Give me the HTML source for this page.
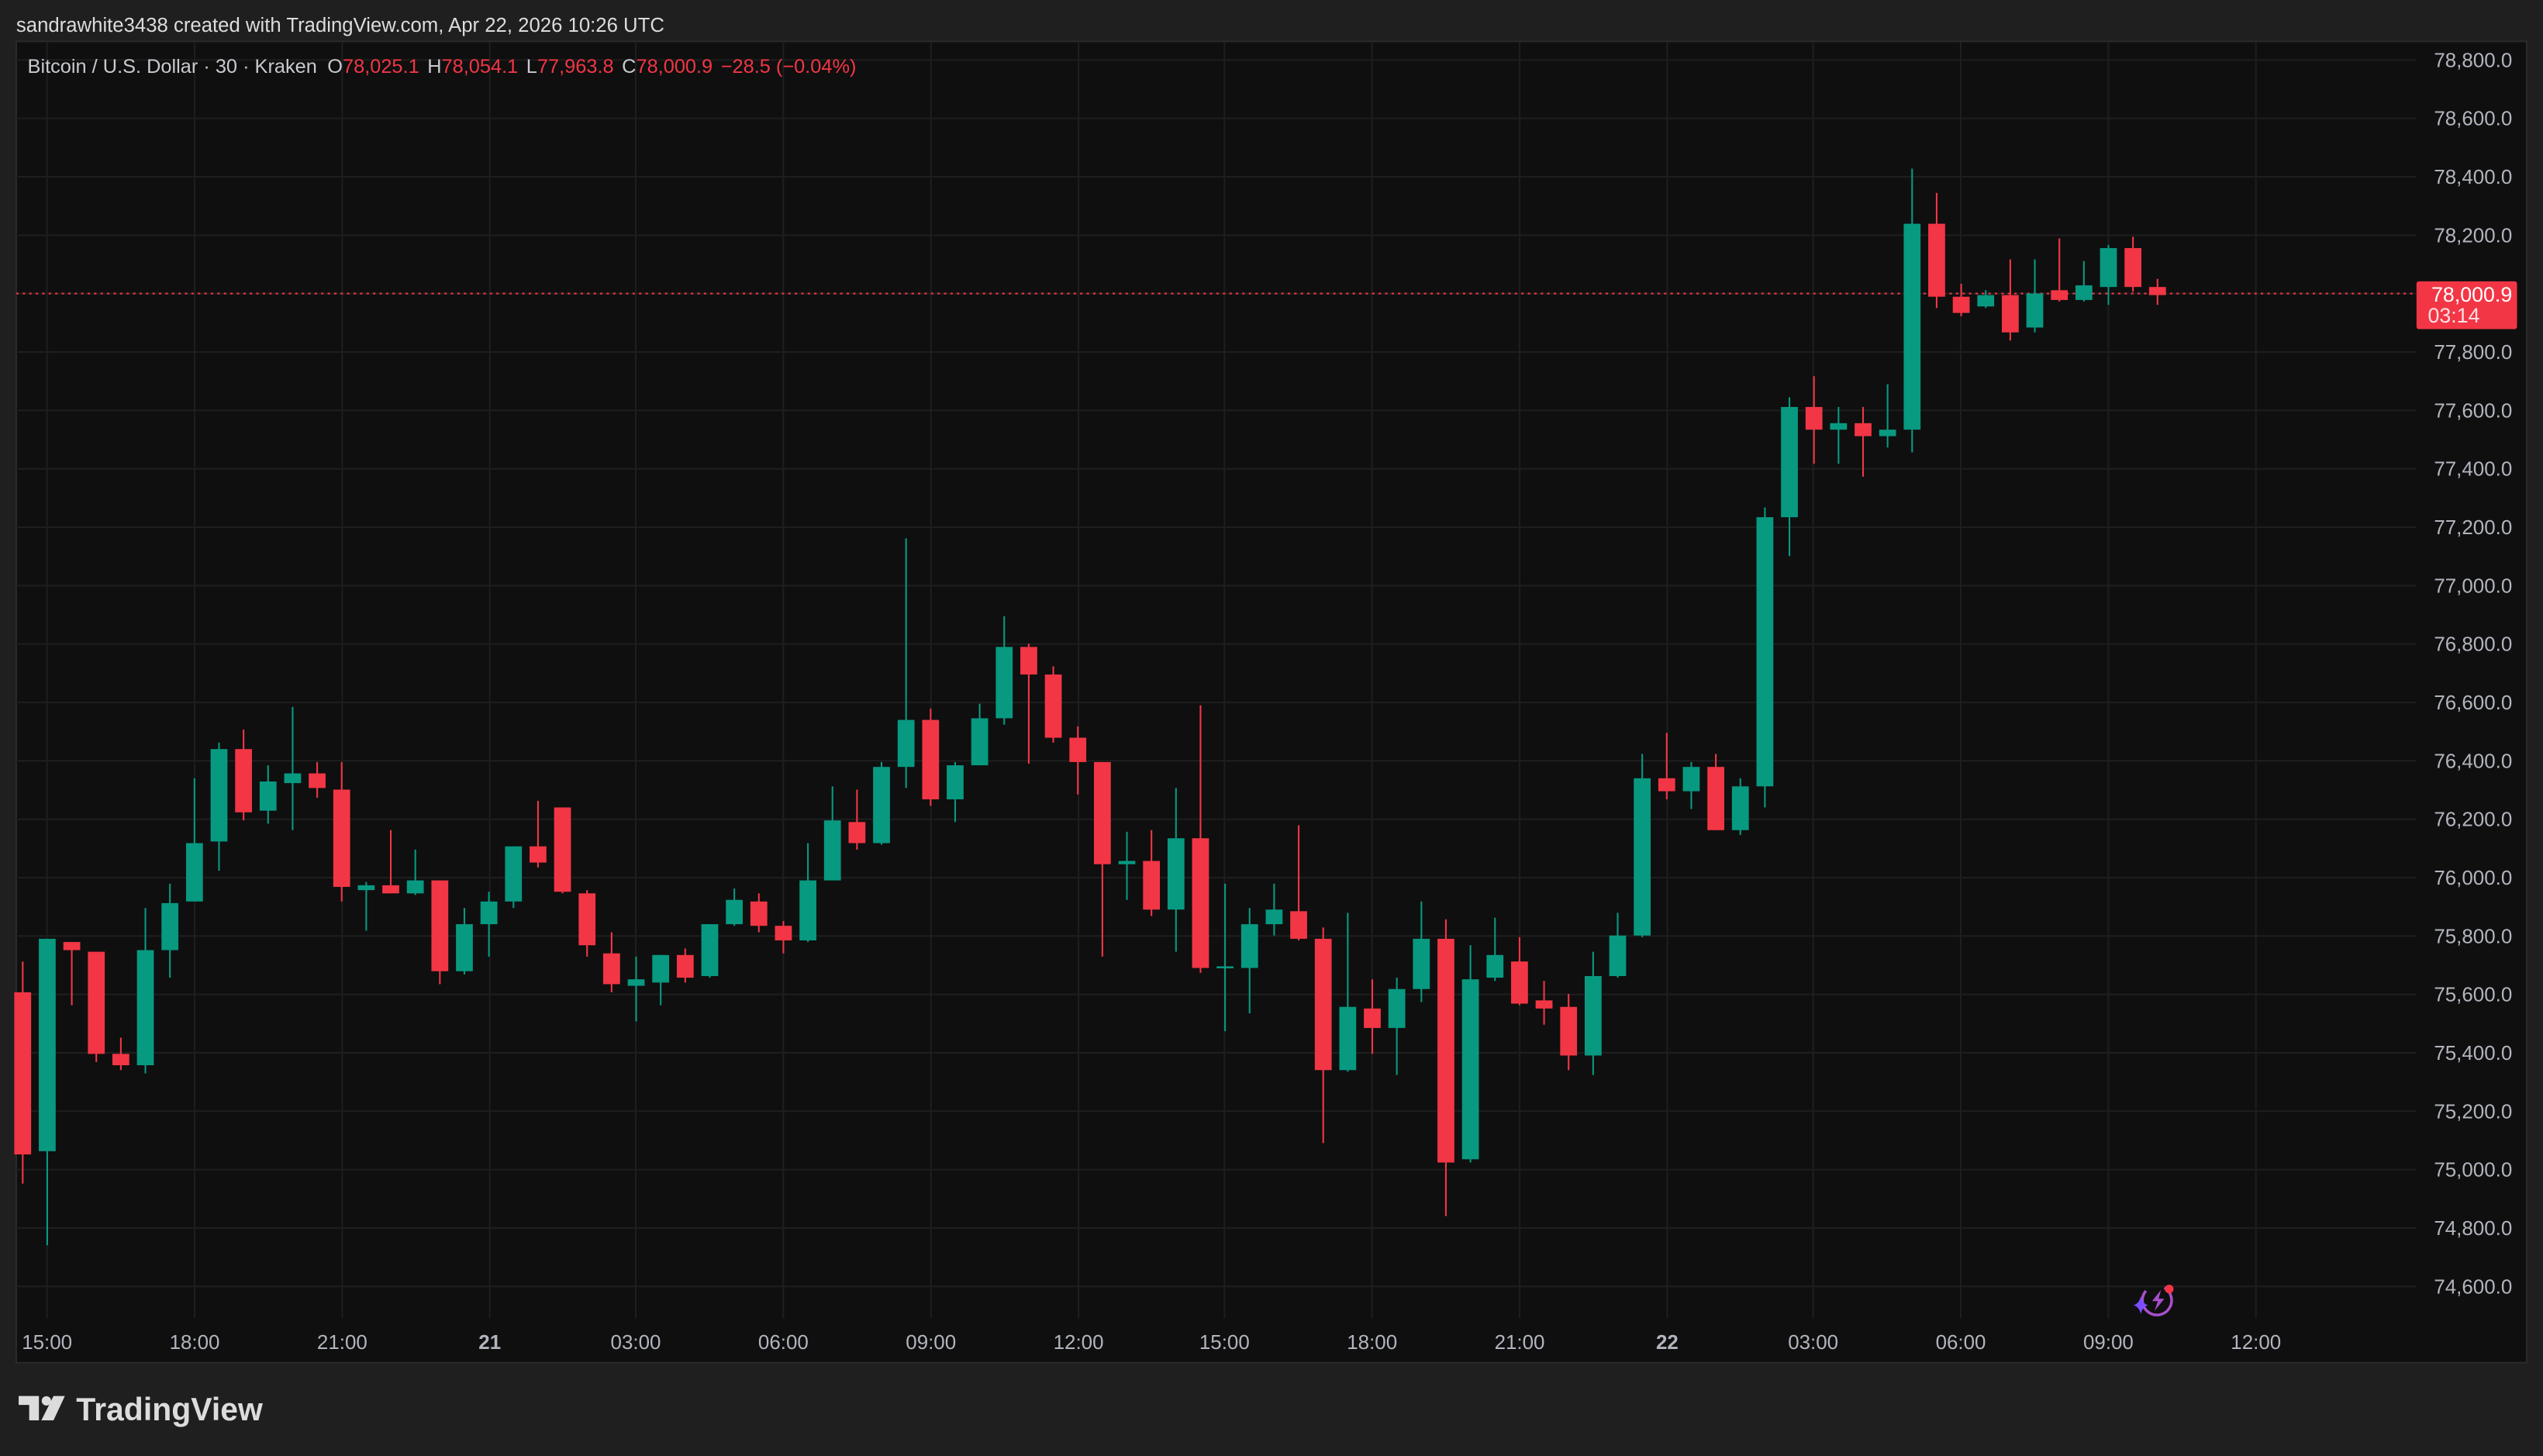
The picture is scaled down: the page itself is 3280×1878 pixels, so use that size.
<!DOCTYPE html>
<html><head><meta charset="utf-8"><style>
html,body{margin:0;padding:0;background:#1f1f1f;}
svg{display:block}
text{font-family:"Liberation Sans",sans-serif}
</style></head><body>
<svg id="s" width="3280" height="1878" viewBox="0 0 1568 898" preserveAspectRatio="none" xmlns="http://www.w3.org/2000/svg">
<rect width="1568" height="898" fill="#1f1f1f"/>
<text x="10" y="19.5" font-size="12.3" fill="#dcdcdc">sandrawhite3438 created with TradingView.com, Apr 22, 2026 10:26 UTC</text>
<rect x="10" y="25.5" width="1548" height="815" fill="#0f0f0f" stroke="#2a2a2a" stroke-width="1"/>
<g id="grid" stroke="#1e1e1e" stroke-width="1"></g>
<g id="plabels" font-size="12.4" fill="#b2b5be" text-anchor="end"></g>
<g id="tlabels" font-size="12.4" fill="#b2b5be" text-anchor="middle"></g>
<line x1="10" y1="181" x2="1490" y2="181" stroke="#f23645" stroke-width="1" stroke-dasharray="1.5,2.5"/>
<g id="candles"></g>
<text x="17" y="45" font-size="12" fill="#c8cad0" textLength="511" lengthAdjust="spacingAndGlyphs">Bitcoin / U.S. Dollar · 30 · Kraken <tspan dx="3">O</tspan><tspan fill="#f23645">78,025.1</tspan><tspan dx="5">H</tspan><tspan fill="#f23645">78,054.1</tspan><tspan dx="5">L</tspan><tspan fill="#f23645">77,963.8</tspan><tspan dx="5">C</tspan><tspan fill="#f23645">78,000.9</tspan><tspan dx="5" fill="#f23645">−28.5 (−0.04%)</tspan></text>
<rect x="1490" y="173.5" width="62" height="29.5" rx="1.5" fill="#f23645"/>
<text x="1549" y="186" font-size="12.8" fill="#ffffff" text-anchor="end">78,000.9</text>
<text x="1497" y="199" font-size="12.8" fill="#fde0e3">03:14</text>
<!-- icon -->
<circle cx="1330" cy="802" r="9" fill="none" stroke="#a94fc9" stroke-width="1.7" stroke-dasharray="44 13" transform="rotate(-60 1330 802)"/>
<path d="M1332.5 795.5 L1327 802.5 L1330.5 802.5 L1328.5 808.5 L1334.5 801 L1331 801 Z" fill="#a94fc9"/>
<circle cx="1337.5" cy="795" r="2.7" fill="#f23645"/>
<path d="M1320 799.5 Q1321 804 1324.5 805 Q1321 806 1320 810.5 Q1319 806 1315.5 805 Q1319 804 1320 799.5 Z" fill="#7a4dff"/>
<!-- logo -->
<path d="M11.5 861 H24 V876 H18 V866.5 H11.5 Z" fill="#dcdcdc"/>
<circle cx="28.6" cy="864" r="2.9" fill="#dcdcdc"/>
<path d="M33 861 H40 L33 876 H25.5 Z" fill="#dcdcdc"/>
<text x="47" y="876" font-size="20" font-weight="bold" fill="#dcdcdc" textLength="115" lengthAdjust="spacingAndGlyphs">TradingView</text>
</svg>
<script>
const NS="http://www.w3.org/2000/svg";
function el(t,a,p,txt){const e=document.createElementNS(NS,t);for(const k in a)e.setAttribute(k,a[k]);if(txt)e.textContent=txt;document.getElementById(p).appendChild(e);}
const ticks=[[29,"15:00"],[120,"18:00"],[211,"21:00"],[302,"21",1],[392,"03:00"],[483,"06:00"],[574,"09:00"],[665,"12:00"],[755,"15:00"],[846,"18:00"],[937,"21:00"],[1028,"22",1],[1118,"03:00"],[1209,"06:00"],[1300,"09:00"],[1391,"12:00"]];
ticks.forEach(t=>{el("line",{x1:t[0],y1:26,x2:t[0],y2:813},"grid");const a={x:t[0],y:832};if(t[2])a["font-weight"]="bold";el("text",a,"tlabels",t[1]);});
for(let i=0;i<=21;i++){const y=37+i*36.02;el("line",{x1:10,y1:y,x2:1490,y2:y},"grid");const p=78800-i*200;el("text",{x:1549,y:y+4.3},"plabels",p.toLocaleString("en-US")+".0");}
const C=[["r",612,712,593,730],["g",579,710,579,768],["r",581,586,581,620],["r",587,650,587,655],["r",650,657,640,660],["g",586,657,560,662],["g",557,586,545,603],["g",520,556,480,556],["g",462,519,458,537],["r",462,501,450,506],["g",482,500,472,508],["g",477,483,436,512],["r",477,486,470,492],["r",487,547,470,556],["g",546,549,544,574],["r",546,551,512,551],["g",543,551,524,552],["r",543,599,543,607],["g",570,599,560,601],["g",556,570,550,590],["g",522,556,522,560],["r",522,532,494,535],["r",498,550,498,551],["r",551,583,549,590],["r",588,607,575,612],["g",604,608,590,630],["g",589,606,589,620],["r",589,603,585,606],["g",570,602,570,603],["g",555,570,548,571],["r",556,571,551,575],["r",571,580,568,588],["g",543,580,520,581],["g",506,543,485,543],["r",507,520,487,524],["g",473,520,470,521],["g",444,473,332,486],["r",444,493,437,497],["g",472,493,470,507],["g",443,472,434,472],["g",399,443,380,447],["r",399,416,397,471],["r",416,455,411,458],["r",455,470,448,490],["r",470,533,470,590],["g",531,533,513,555],["r",531,561,512,565],["g",517,561,486,587],["r",517,597,435,600],["g",596,597,545,636],["g",570,597,560,625],["g",561,570,545,577],["r",562,579,509,580],["r",579,660,572,705],["g",621,660,563,661],["r",622,634,604,650],["g",610,634,603,663],["g",579,610,556,618],["r",579,717,567,750],["g",604,715,583,717],["g",589,603,566,605],["r",593,619,578,620],["r",617,622,605,632],["r",621,651,613,660],["g",602,651,587,663],["g",577,602,563,603],["g",480,577,465,578],["r",480,488,452,493],["g",473,488,470,499],["r",473,512,465,512],["g",485,512,480,515],["g",319,485,313,498],["g",251,319,245,343],["r",251,265,232,286],["g",261,265,251,286],["r",261,269,251,294],["g",265,269,237,276],["g",138,265,104,279],["r",138,183,119,190],["r",183,193,175,195],["g",182,189,179,190],["r",182,205,160,210],["g",181,202,160,205],["r",179,185,147,186],["g",176,185,161,186],["g",153,177,151,188],["r",153,177,146,180],["r",177,182,172,188]];
C.forEach((c,i)=>{const x=14+i*15.13;const col=c[0]=="g"?"#089981":"#f23645";
el("rect",{x:x-0.5,y:c[3],width:1,height:c[4]-c[3],fill:col},"candles");
el("rect",{x:x-5.2,y:c[1],width:10.4,height:Math.max(1.2,c[2]-c[1]),fill:col},"candles");});
</script>
</body></html>
